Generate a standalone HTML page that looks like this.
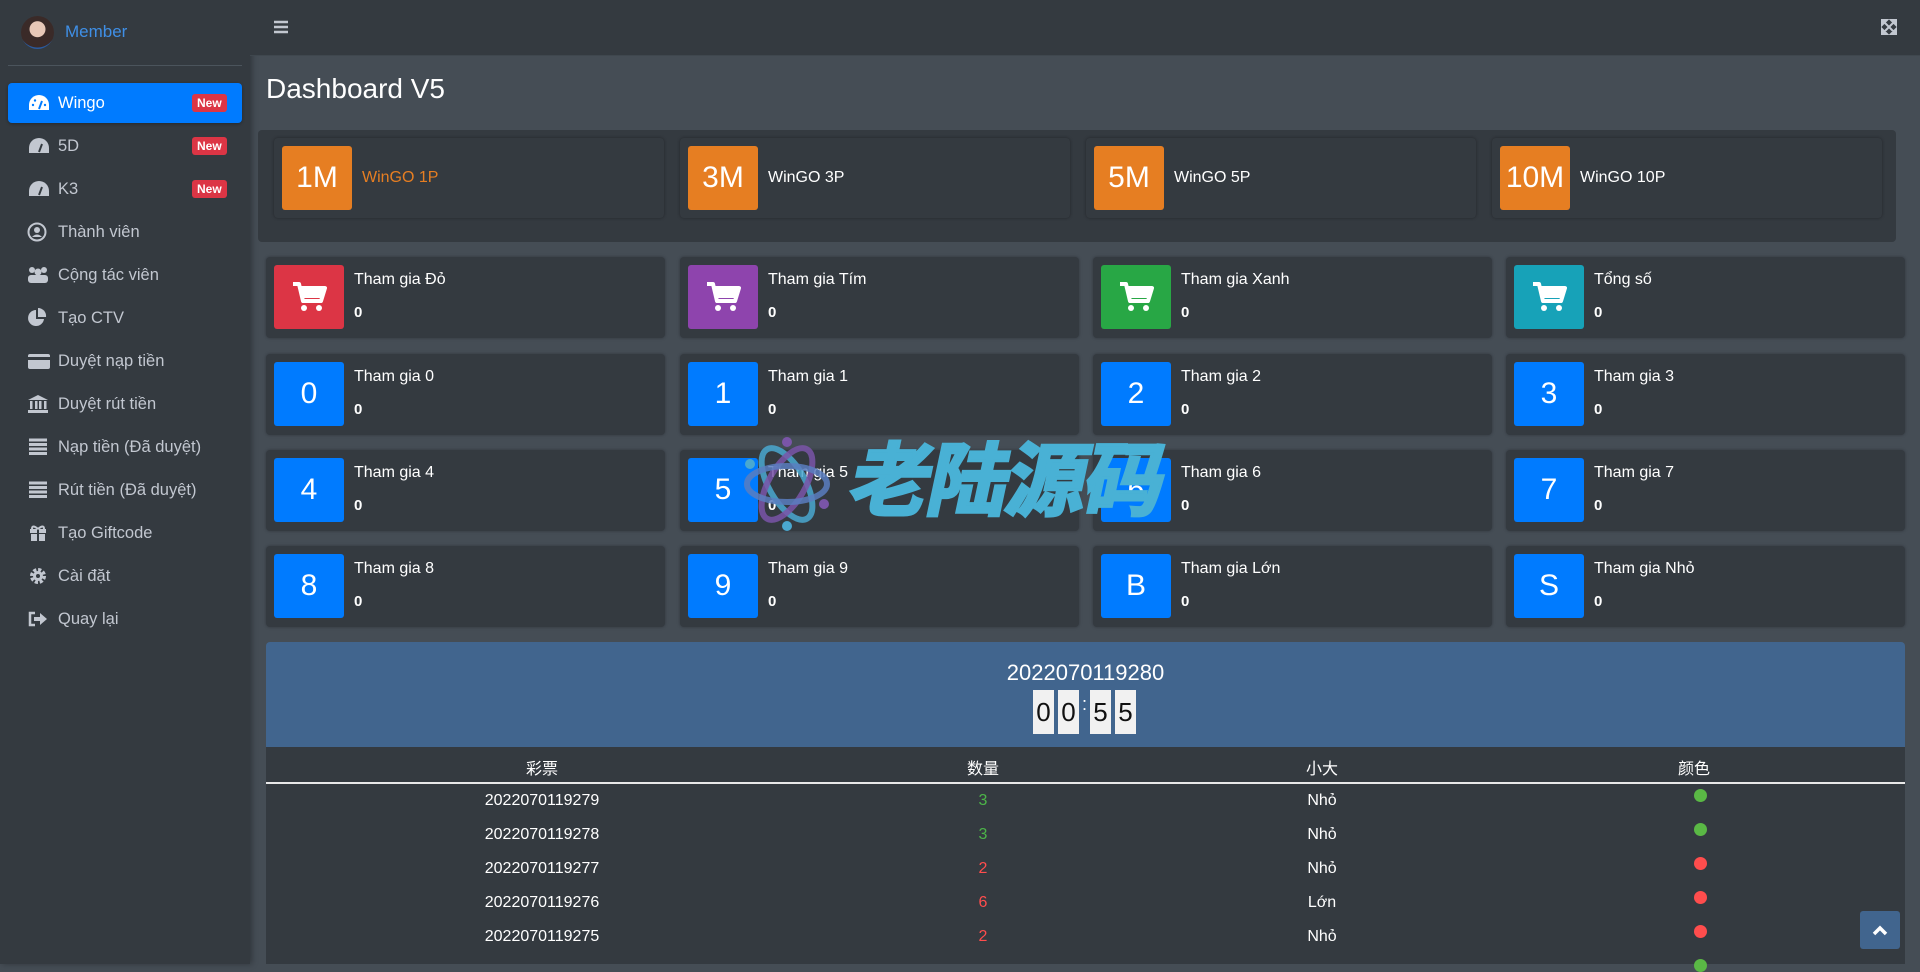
<!DOCTYPE html>
<html><head><meta charset="utf-8"><style>
*{box-sizing:border-box;margin:0;padding:0}
body{width:1920px;height:964px;overflow:hidden;background:#454d55;font-family:"Liberation Sans","Noto Sans CJK SC",sans-serif;color:#fff;position:relative}
.sb{position:absolute;left:0;top:0;width:250px;height:964px;background:#343a40;box-shadow:2px 0 6px rgba(0,0,0,.3)}
.av{position:absolute;left:21px;top:16px;width:33px;height:33px;border-radius:50%;background:radial-gradient(circle at 50% 40%,#e8c8b8 0 30%,#3a2a28 32% 70%,#2a5aa0 72%)}
.mem{position:absolute;left:65px;top:22px;font-size:17px;color:#3f8fe6}
.div{position:absolute;left:8px;top:65px;width:234px;height:1px;background:#4b545c}
.it{position:absolute;left:8px;width:234px;height:40px;font-size:16.5px;color:#c2c7d0;display:flex;align-items:center;padding-left:50px}
.it.act{background:#007bff;color:#fff;border-radius:4px;box-shadow:0 1px 3px rgba(0,0,0,.3)}
.it svg{position:absolute;left:19px;top:10px}
.new{position:absolute;left:184px;top:11px;background:#dc3545;color:#fff;font-size:12px;font-weight:bold;padding:2px 5px;border-radius:3px}
.top{position:absolute;left:250px;top:0;width:1670px;height:56px;background:#343a40;border-bottom:1px solid #3f474e}
h1{position:absolute;left:266px;top:73px;font-size:28px;font-weight:normal}
.wrap{position:absolute;left:258px;top:130px;width:1638px;height:112px;background:#343a40;border-radius:4px}
.gc{position:absolute;top:138px;width:390px;height:80px;background:#343a40;border-radius:4px;box-shadow:0 0 3px rgba(0,0,0,.35)}
.gc .b{position:absolute;left:8px;top:8px;width:70px;height:64px;background:#e67e22;border-radius:3px;font-size:30px;display:flex;align-items:center;justify-content:center}
.gc .t{position:absolute;left:88px;top:31px;font-size:16px}
.sc{position:absolute;width:399px;height:81px;background:#343a40;border-radius:4px;box-shadow:0 0 3px rgba(0,0,0,.3)}
.sc .b{position:absolute;left:8px;top:8px;width:70px;height:64px;border-radius:3px;font-size:30px;display:flex;align-items:center;justify-content:center;background:#007bff}
.sc .t{position:absolute;left:88px;top:14px;font-size:16px}
.sc .n{position:absolute;left:88px;top:47px;font-size:15px;font-weight:bold}
.pan{position:absolute;left:266px;top:642px;width:1639px;height:105px;background:#41658e;border-radius:4px 4px 0 0}
.pt{position:absolute;left:0;width:100%;top:18px;text-align:center;font-size:22px}
.dg{position:absolute;top:48px;width:21px;height:44px;background:#f1f1f1;color:#111;font-size:26px;display:flex;align-items:center;justify-content:center}
.tb{position:absolute;left:266px;top:747px;width:1639px;height:217px;background:#343a40}
.row{position:absolute;left:0;width:1639px;height:20px;font-size:16px}
.row span{position:absolute;top:0;transform:translateX(-50%)}
.dot{position:absolute;width:13px;height:13px;border-radius:50%}
</style></head><body>
<div class="sb">
<div class="av"></div><div class="mem">Member</div><div class="div"></div>
<div class="it act" style="top:83px"><svg width="24" height="20" viewBox="0 0 24 20"><path d="M12 2A10 10 0 0 0 2 12v5h20v-5A10 10 0 0 0 12 2z" fill="#fff"/><path d="M12 16l3-8" stroke="#007bff" stroke-width="2"/><circle cx="6" cy="12" r="1.2" fill="#007bff"/><circle cx="8" cy="7.5" r="1.2" fill="#007bff"/><circle cx="18" cy="12" r="1.2" fill="#007bff"/></svg>Wingo<span class="new">New</span></div>
<div class="it" style="top:126px"><svg width="24" height="20" viewBox="0 0 24 20"><path d="M12 2A10 10 0 0 0 2 12v5h20v-5A10 10 0 0 0 12 2z" fill="#c2c7d0"/><path d="M12 16l3-8" stroke="#343a40" stroke-width="2"/></svg>5D<span class="new">New</span></div>
<div class="it" style="top:169px"><svg width="24" height="20" viewBox="0 0 24 20"><path d="M12 2A10 10 0 0 0 2 12v5h20v-5A10 10 0 0 0 12 2z" fill="#c2c7d0"/><path d="M12 16l3-8" stroke="#343a40" stroke-width="2"/></svg>K3<span class="new">New</span></div>
<div class="it" style="top:212px"><svg width="22" height="20" viewBox="0 0 22 20"><circle cx="10" cy="10" r="8.5" fill="none" stroke="#c2c7d0" stroke-width="2"/><circle cx="10" cy="8" r="3" fill="#c2c7d0"/><path d="M5 15q5-5 10 0" fill="#c2c7d0"/></svg>Thành viên</div>
<div class="it" style="top:255px"><svg width="22" height="20" viewBox="0 0 22 20"><circle cx="5" cy="5" r="3" fill="#c2c7d0"/><circle cx="17" cy="5" r="3" fill="#c2c7d0"/><circle cx="11" cy="7" r="3.5" fill="#c2c7d0"/><rect x="1" y="10" width="20" height="8" rx="3" fill="#c2c7d0"/></svg>Cộng tác viên</div>
<div class="it" style="top:298px"><svg width="22" height="20" viewBox="0 0 22 20"><path d="M9 2a8 8 0 1 0 8 9H9z" fill="#c2c7d0"/><path d="M11 0v9h8a8 8 0 0 0-8-9z" fill="#c2c7d0"/></svg>Tạo CTV</div>
<div class="it" style="top:341px"><svg width="24" height="20" viewBox="0 0 24 20"><rect x="1" y="3" width="22" height="15" rx="2" fill="#c2c7d0"/><rect x="1" y="6" width="22" height="3" fill="#343a40"/></svg>Duyệt nạp tiền</div>
<div class="it" style="top:384px"><svg width="22" height="20" viewBox="0 0 22 20"><path d="M11 1l10 5H1z" fill="#c2c7d0"/><rect x="3" y="7" width="2.5" height="8" fill="#c2c7d0"/><rect x="8" y="7" width="2.5" height="8" fill="#c2c7d0"/><rect x="12" y="7" width="2.5" height="8" fill="#c2c7d0"/><rect x="17" y="7" width="2.5" height="8" fill="#c2c7d0"/><rect x="1" y="16" width="20" height="3" fill="#c2c7d0"/></svg>Duyệt rút tiền</div>
<div class="it" style="top:427px"><svg width="22" height="20" viewBox="0 0 22 20"><path d="M2 3h18M2 7.5h18M2 12h18M2 16.5h18" stroke="#c2c7d0" stroke-width="3"/></svg>Nạp tiền (Đã duyệt)</div>
<div class="it" style="top:470px"><svg width="22" height="20" viewBox="0 0 22 20"><path d="M2 3h18M2 7.5h18M2 12h18M2 16.5h18" stroke="#c2c7d0" stroke-width="3"/></svg>Rút tiền (Đã duyệt)</div>
<div class="it" style="top:513px"><svg width="22" height="20" viewBox="0 0 22 20"><rect x="3" y="6" width="16" height="4" fill="#c2c7d0"/><rect x="4" y="11" width="14" height="7" fill="#c2c7d0"/><rect x="10" y="6" width="2" height="12" fill="#343a40"/><path d="M11 6q-6-5-6 0M11 6q6-5 6 0" stroke="#c2c7d0" stroke-width="2" fill="none"/></svg>Tạo Giftcode</div>
<div class="it" style="top:556px"><svg width="22" height="20" viewBox="0 0 22 20"><circle cx="11" cy="10" r="6" fill="none" stroke="#c2c7d0" stroke-width="4" stroke-dasharray="3 1.7"/><circle cx="11" cy="10" r="5" fill="#c2c7d0"/><circle cx="11" cy="10" r="2" fill="#343a40"/></svg>Cài đặt</div>
<div class="it" style="top:599px"><svg width="22" height="20" viewBox="0 0 22 20"><path d="M8 4H3v12h5" stroke="#c2c7d0" stroke-width="2.5" fill="none"/><path d="M7 8h6V4l7 6-7 6v-4H7z" fill="#c2c7d0"/></svg>Quay lại</div>
</div>
<div class="top"><svg style="position:absolute;left:23px;top:20px" width="16" height="14" viewBox="0 0 16 14"><path d="M1 2h14M1 7h14M1 12h14" stroke="#c2c7d0" stroke-width="2.5"/></svg>
<svg style="position:absolute;left:1631px;top:19px" width="16" height="16" viewBox="0 0 16 16"><path d="M1 1h5L1 6zM15 1h-5l5 5zM1 15h5l-5-5zM15 15h-5l5-5zM3 3l10 10M13 3L3 13" stroke="#c2c7d0" stroke-width="2" fill="#c2c7d0"/></svg></div>
<h1>Dashboard V5</h1>
<div class="wrap"></div>
<div class="gc" style="left:274px"><div class="b">1M</div><div class="t" style="color:#e67e22">WinGO 1P</div></div>
<div class="gc" style="left:680px"><div class="b">3M</div><div class="t">WinGO 3P</div></div>
<div class="gc" style="left:1086px"><div class="b">5M</div><div class="t">WinGO 5P</div></div>
<div class="gc" style="left:1492px"><div class="b">10M</div><div class="t">WinGO 10P</div></div>

<div class="sc" style="left:266px;top:257px"><div class="b" style="background:#dc3545"><svg width="36" height="32" viewBox="0 0 36 32"><path d="M2 3h6l4 17h18l4-13H10" fill="none" stroke="#fff" stroke-width="4" stroke-linejoin="round"/><rect x="10" y="8" width="22" height="9" fill="#fff"/><circle cx="13" cy="27" r="3" fill="#fff"/><circle cx="28" cy="27" r="3" fill="#fff"/></svg></div><div class="t">Tham gia Đỏ</div><div class="n">0</div></div>
<div class="sc" style="left:680px;top:257px"><div class="b" style="background:#8e44ad"><svg width="36" height="32" viewBox="0 0 36 32"><path d="M2 3h6l4 17h18l4-13H10" fill="none" stroke="#fff" stroke-width="4" stroke-linejoin="round"/><rect x="10" y="8" width="22" height="9" fill="#fff"/><circle cx="13" cy="27" r="3" fill="#fff"/><circle cx="28" cy="27" r="3" fill="#fff"/></svg></div><div class="t">Tham gia Tím</div><div class="n">0</div></div>
<div class="sc" style="left:1093px;top:257px"><div class="b" style="background:#28a745"><svg width="36" height="32" viewBox="0 0 36 32"><path d="M2 3h6l4 17h18l4-13H10" fill="none" stroke="#fff" stroke-width="4" stroke-linejoin="round"/><rect x="10" y="8" width="22" height="9" fill="#fff"/><circle cx="13" cy="27" r="3" fill="#fff"/><circle cx="28" cy="27" r="3" fill="#fff"/></svg></div><div class="t">Tham gia Xanh</div><div class="n">0</div></div>
<div class="sc" style="left:1506px;top:257px"><div class="b" style="background:#17a2b8"><svg width="36" height="32" viewBox="0 0 36 32"><path d="M2 3h6l4 17h18l4-13H10" fill="none" stroke="#fff" stroke-width="4" stroke-linejoin="round"/><rect x="10" y="8" width="22" height="9" fill="#fff"/><circle cx="13" cy="27" r="3" fill="#fff"/><circle cx="28" cy="27" r="3" fill="#fff"/></svg></div><div class="t">Tổng số</div><div class="n">0</div></div>

<div class="sc" style="left:266px;top:354px"><div class="b">0</div><div class="t">Tham gia 0</div><div class="n">0</div></div>
<div class="sc" style="left:680px;top:354px"><div class="b">1</div><div class="t">Tham gia 1</div><div class="n">0</div></div>
<div class="sc" style="left:1093px;top:354px"><div class="b">2</div><div class="t">Tham gia 2</div><div class="n">0</div></div>
<div class="sc" style="left:1506px;top:354px"><div class="b">3</div><div class="t">Tham gia 3</div><div class="n">0</div></div>
<div class="sc" style="left:266px;top:450px"><div class="b">4</div><div class="t">Tham gia 4</div><div class="n">0</div></div>
<div class="sc" style="left:680px;top:450px"><div class="b">5</div><div class="t">Tham gia 5</div><div class="n">0</div></div>
<div class="sc" style="left:1093px;top:450px"><div class="b">6</div><div class="t">Tham gia 6</div><div class="n">0</div></div>
<div class="sc" style="left:1506px;top:450px"><div class="b">7</div><div class="t">Tham gia 7</div><div class="n">0</div></div>
<div class="sc" style="left:266px;top:546px"><div class="b">8</div><div class="t">Tham gia 8</div><div class="n">0</div></div>
<div class="sc" style="left:680px;top:546px"><div class="b">9</div><div class="t">Tham gia 9</div><div class="n">0</div></div>
<div class="sc" style="left:1093px;top:546px"><div class="b">B</div><div class="t">Tham gia Lớn</div><div class="n">0</div></div>
<div class="sc" style="left:1506px;top:546px"><div class="b">S</div><div class="t">Tham gia Nhỏ</div><div class="n">0</div></div>

<svg style="position:absolute;left:742px;top:436px" width="90" height="96" viewBox="0 0 90 96"><g fill="none" stroke-width="6"><ellipse cx="45" cy="48" rx="40" ry="18" stroke="#4aa8d0" transform="rotate(60 45 48)" opacity=".85"/><ellipse cx="45" cy="48" rx="40" ry="18" stroke="#7a55a8" transform="rotate(-60 45 48)" opacity=".85"/><ellipse cx="45" cy="48" rx="40" ry="18" stroke="#5a7ec0" opacity=".85"/></g><circle cx="45" cy="6" r="5" fill="#7a55a8"/><circle cx="45" cy="90" r="5" fill="#4aa8d0"/><circle cx="8" cy="28" r="5" fill="#4aa8d0"/><circle cx="82" cy="68" r="5" fill="#7a55a8"/></svg>
<div style="position:absolute;left:852px;top:437px;font-size:80px;font-weight:bold;color:#49b1d5;letter-spacing:-2px;line-height:90px;transform:skewX(-12deg);-webkit-text-stroke:3px #49b1d5">老陆源码</div>

<div class="pan"><div class="pt">2022070119280</div>
<div class="dg" style="left:767px">0</div><div class="dg" style="left:792px">0</div>
<div style="position:absolute;left:816px;top:52px;font-size:18px">:</div>
<div class="dg" style="left:824px">5</div><div class="dg" style="left:849px">5</div></div>
<div class="tb">
<div class="row" style="top:8px"><span style="left:276px">彩票</span><span style="left:717px">数量</span><span style="left:1056px">小大</span><span style="left:1428px">颜色</span></div>
<div style="position:absolute;left:0;top:35px;width:1639px;height:2px;background:#e8e8e8"></div>
<div class="row" style="top:45px"><span style="left:276px">2022070119279</span><span style="left:717px;color:#4cb548">3</span><span style="left:1056px">Nhỏ</span></div>
<div class="row" style="top:79px"><span style="left:276px">2022070119278</span><span style="left:717px;color:#4cb548">3</span><span style="left:1056px">Nhỏ</span></div>
<div class="row" style="top:113px"><span style="left:276px">2022070119277</span><span style="left:717px;color:#ff4d4d">2</span><span style="left:1056px">Nhỏ</span></div>
<div class="row" style="top:147px"><span style="left:276px">2022070119276</span><span style="left:717px;color:#ff4d4d">6</span><span style="left:1056px">Lớn</span></div>
<div class="row" style="top:181px"><span style="left:276px">2022070119275</span><span style="left:717px;color:#ff4d4d">2</span><span style="left:1056px">Nhỏ</span></div>
<div class="dot" style="left:1428px;top:42px;background:#5ab845"></div>
<div class="dot" style="left:1428px;top:76px;background:#5ab845"></div>
<div class="dot" style="left:1428px;top:110px;background:#ff4d4d"></div>
<div class="dot" style="left:1428px;top:144px;background:#ff4d4d"></div>
<div class="dot" style="left:1428px;top:178px;background:#ff4d4d"></div>
<div class="dot" style="left:1428px;top:212px;background:#5ab845"></div>
</div>
<div style="position:absolute;left:1860px;top:911px;width:40px;height:38px;background:#41658e;border-radius:3px"><svg style="position:absolute;left:12px;top:13px" width="16" height="12" viewBox="0 0 16 12"><path d="M2 10l6-6 6 6" stroke="#fff" stroke-width="3.5" fill="none"/></svg></div>
</body></html>
